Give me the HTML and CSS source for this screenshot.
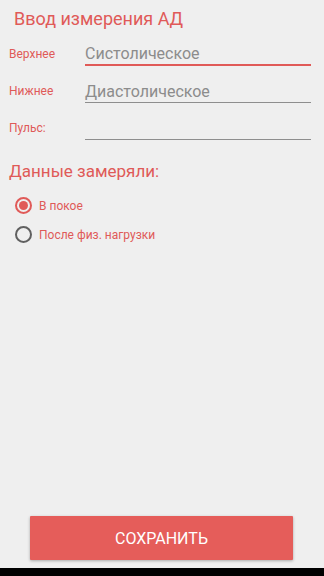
FILE: index.html
```html
<!DOCTYPE html>
<html lang="ru">
<head>
    <meta charset="UTF-8">
    <meta name="viewport" content="width=device-width, initial-scale=1.0">
    <title>Ввод измерения АД</title>

    <link rel="stylesheet" href="styles.css">

</head>
<body>

    <div id="wrapper">

        <div id="content">

            <h1 class="title">Ввод измерения АД</h1>

            <div class="fields">

                <label class="field">
                    <span class="field_label">Верхнее</span>
                    <span class="field_input active">Систолическое</span>
                </label>

                <label class="field">
                    <span class="field_label">Нижнее</span>
                    <span class="field_input">Диастолическое</span>
                </label>

                <label class="field">
                    <span class="field_label">Пульс:</span>
                    <span class="field_input"></span>
                </label>

            </div>

            <h2 class="subtitle">Данные замеряли:</h2>

            <div class="radios">

                <div class="radio checked">
                    <span class="radio_circle"></span>
                    <span class="radio_text">В покое</span>
                </div>

                <div class="radio">
                    <span class="radio_circle"></span>
                    <span class="radio_text">После физ. нагрузки</span>
                </div>

            </div>

        </div>

        <div id="footer">
            <button class="save_button">СОХРАНИТЬ</button>
        </div>

        <div id="navbar"></div>

    </div>

</body>
</html>
```

FILE: styles.css
```css
*{
    font-family: Roboto, "Noto Sans", sans-serif;
    box-sizing: border-box;
}

body{
    margin: 0;
    padding: 0;

    width: 324px;
    height: 576px;

    background: #efefef;
}

#wrapper{
    height: 100%;

    display: flex;
    flex-direction: column;
}

#content{
    flex: 1;
    padding: 0 13px 0 9px;
}

.title{
    margin: 8px 0 0 5px;

    font-size: 18px;
    font-weight: 400;
    color: #e05a58;
}

.fields{
    margin-top: 0;
}

.field{
    height: 37px;

    display: flex;
    align-items: flex-end;
}

.field_label{
    width: 76px;
    padding-bottom: 5px;

    font-size: 12px;
    color: #df5a58;
}

.field_input{
    flex: 1;
    height: 28px;
    padding-bottom: 1px;

    display: flex;
    align-items: flex-end;

    font-size: 16px;
    color: #8c8c8c;

    border-bottom: 1px solid #8e8e8e;
}

.field_input.active{
    border-bottom: 2px solid #e05a58;
}

.subtitle{
    margin: 21px 0 0 0;

    font-size: 17px;
    font-weight: 400;
    color: #df5a58;
}

.radios{
    margin-top: 10px;
    padding-left: 6px;
}

.radio{
    height: 29px;

    display: flex;
    align-items: center;
    gap: 7px;
}

.radio_circle{
    width: 17px;
    height: 17px;

    border: 2px solid #606060;
    border-radius: 50%;

    display: grid;
    place-items: center;
}

.radio.checked .radio_circle{
    border-color: #e05a58;
}

.radio.checked .radio_circle::after{
    content: "";
    width: 9px;
    height: 9px;

    border-radius: 50%;
    background: #e05a58;
}

.radio_text{
    font-size: 12px;
    color: #df5a58;
}

#footer{
    padding: 0 31px 8px 30px;
}

.save_button{
    width: 100%;
    height: 44px;

    border: none;
    border-radius: 1px;
    background: #e55d5a;
    box-shadow: 0 1px 3px rgba(0, 0, 0, 0.3);

    font-size: 16px;
    color: #ffffff;
}

#navbar{
    height: 8px;
    background: #000000;
}
```
